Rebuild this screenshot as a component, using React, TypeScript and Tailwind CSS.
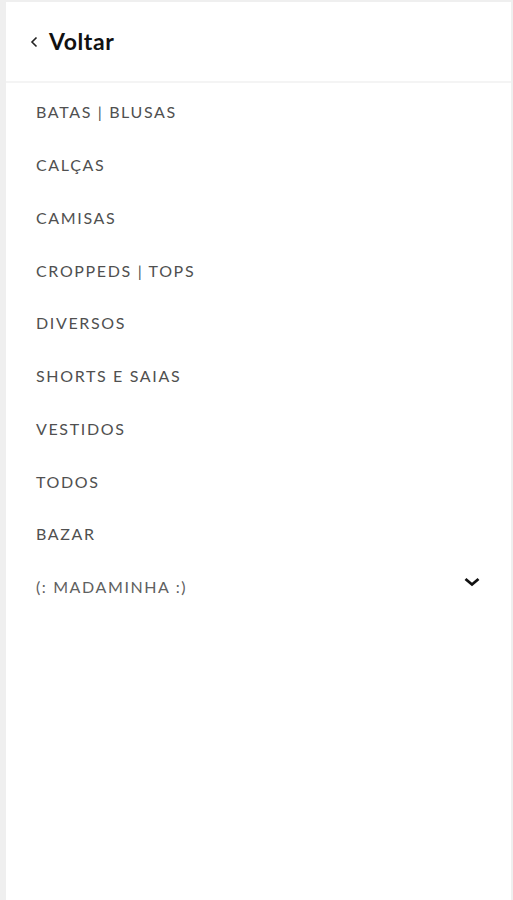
import React from "react";

const items = [
  "BATAS | BLUSAS",
  "CALÇAS",
  "CAMISAS",
  "CROPPEDS | TOPS",
  "DIVERSOS",
  "SHORTS E SAIAS",
  "VESTIDOS",
  "TODOS",
  "BAZAR",
];

export default function App() {
  return (
    <div className="w-[513px] h-[900px] bg-[#efefef] pl-[6px] pr-[2px] pt-[2px] overflow-hidden" style={{ fontFamily: "Lato, 'Open Sans', sans-serif" }}>
      <div className="h-full bg-white flex flex-col">
        <div className="h-[81px] flex items-center pl-[24px] border-b-[2px] border-[#f4f4f4]">
          <svg width="9" height="12" viewBox="0 0 9 12" className="mr-[10px] mt-[1px]">
            <path d="M6.5 1.5 L2 6 L6.5 10.5" fill="none" stroke="#222" strokeWidth="1.6" />
          </svg>
          <span className="text-[23px] font-bold text-[#111] tracking-[0.6px]">Voltar</span>
        </div>
        <div className="flex flex-col pt-[3px]">
          {items.map((t) => (
            <div key={t} className="h-[52.75px] flex items-center pl-[30px] text-[16px] tracking-[1.65px] text-[#505050]">
              {t}
            </div>
          ))}
          <div className="h-[52.75px] flex items-center justify-between pl-[30px] pr-[30px] text-[16px] tracking-[1.6px] text-[#606060]">
            <span>(: MADAMINHA :)</span>
            <svg width="18" height="12" viewBox="0 0 18 12" className="-mt-[10px]">
              <path d="M2.5 3 L9 8.5 L15.5 3" fill="none" stroke="#111" strokeWidth="2.8" />
            </svg>
          </div>
        </div>
      </div>
    </div>
  );
}
